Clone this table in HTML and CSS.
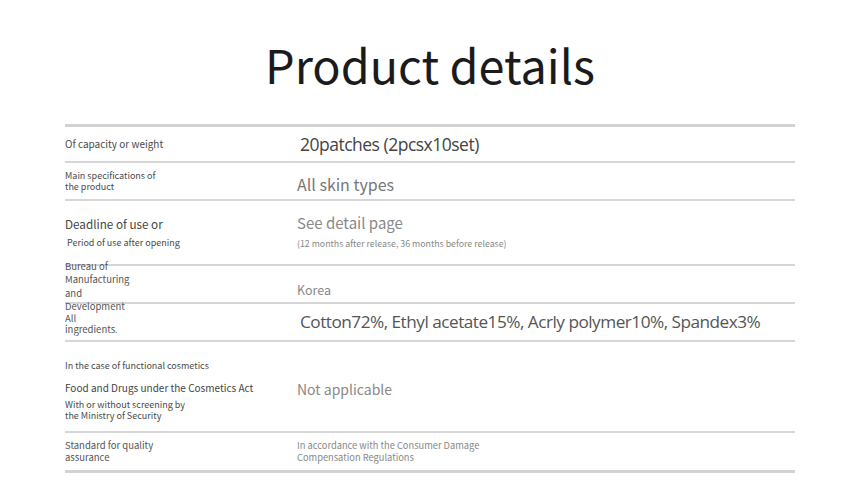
FILE: index.html
```html
<!DOCTYPE html>
<html>
<head>
<meta charset="utf-8">
<link rel="stylesheet" href="styles.css">
</head>
<body>
<div class="page">
  <h1 class="title">Product details</h1>
  <div class="table">
    <div class="row r1">
      <div class="label"><span class="l10">Of capacity or weight</span></div>
      <div class="value"><span class="v-big dark">20patches (2pcsx10set)</span></div>
    </div>
    <div class="row r2">
      <div class="label"><span class="l9">Main specifications of<br>the product</span></div>
      <div class="value pad6"><span class="v16 grey">All skin types</span></div>
    </div>
    <div class="row r3">
      <div class="label col3">
        <span class="l12">Deadline of use or</span>
        <span class="l9 ind">Period of use after opening</span>
      </div>
      <div class="value col3v">
        <span class="v15 grey2">See detail page</span>
        <span class="s9">(12 months after release, 36 months before release)</span>
      </div>
    </div>
    <div class="row r4">
      <div class="label up"><span class="l95">Bureau of<br>Manufacturing<br>and<br>Development</span></div>
      <div class="value"><span class="v13 grey2">Korea</span></div>
    </div>
    <div class="row r5">
      <div class="label down"><span class="l95 tight">All<br>ingredients.</span></div>
      <div class="value"><span class="v-big mid cotton">Cotton72%, Ethyl acetate15%, Acrly polymer10%, Spandex3%</span></div>
    </div>
    <div class="row r6">
      <div class="label col6">
        <span class="l9">In the case of functional cosmetics</span>
        <span class="l10b mt">Food and Drugs under the Cosmetics Act</span>
        <span class="l9 mt2">With or without screening by<br>the Ministry of Security</span>
      </div>
      <div class="value col6v"><span class="v14 grey2">Not applicable</span></div>
    </div>
    <div class="row r7">
      <div class="label"><span class="l95 r7l">Standard for quality<br>assurance</span></div>
      <div class="value"><span class="s95">In accordance with the Consumer Damage<br>Compensation Regulations</span></div>
    </div>
  </div>
</div>
</body>
</html>
```

FILE: styles.css
```css
* { box-sizing: border-box; }
html, body { margin: 0; padding: 0; background: #ffffff; }
body { font-family: "Noto Sans CJK KR", "Noto Sans", sans-serif; color: #444; }

.page { width: 860px; height: 503px; padding-left: 65px; }

.title {
  width: 730px;
  margin: 0;
  height: 124px;
  padding-top: 33px;
  text-align: center;
  font-weight: 400;
  font-size: 46.8px;
  line-height: 62px;
  color: #1b1b1b;
}

.table {
  width: 730px;
  border-top: 3px solid #d2d2d2;
}

.row {
  display: grid;
  grid-template-columns: 232px 1fr;
  border-bottom: 2px solid #d6d6d6;
}
.r1 { height: 36px; }
.r2 { height: 38px; }
.r3 { height: 65px; }
.r4 { height: 38px; }
.r5 { height: 38px; }
.r6 { height: 91px; }
.r7 { height: 40px; border-bottom-width: 3px; border-bottom-color: #d2d2d2; }

.label, .value { display: flex; align-items: center; }

.pad6 { padding-top: 6px; }

.col3 { flex-direction: column; align-items: flex-start; justify-content: flex-start; padding-top: 15px; }
.col3v { flex-direction: column; align-items: flex-start; justify-content: flex-start; padding-top: 12px; }
.col6 { flex-direction: column; align-items: flex-start; justify-content: flex-start; padding-top: 18px; }
.col6v { align-items: flex-start; padding-top: 38px; }

.up { align-items: flex-start; margin-top: -6px; }
.down { padding-top: 3px; }

.l10 { font-size: 10px; line-height: 14px; color: #4a4a4a; }
.l10b { font-size: 10px; line-height: 14px; color: #444; }
.l9 { font-size: 9px; line-height: 11px; color: #4a4a4a; }
.l95 { font-size: 9.5px; line-height: 13.3px; color: #555; }
.l95.tight { line-height: 11px; }
.l95.r7l { line-height: 11.5px; }
.l12 { font-size: 11.7px; line-height: 16px; color: #444; }
.ind { margin-top: 5px; padding-left: 2px; }
.mt { margin-top: 10px; }
.mt2 { margin-top: 4px; }

.v-big { font-family: "Open Sans", sans-serif; font-size: 17.5px; line-height: 22px; letter-spacing: -0.5px; padding-left: 3px; }
.v-big.cotton { font-size: 17.2px; }
.dark { color: #444; }
.mid { color: #555; }
.v16 { font-size: 16px; line-height: 20px; }
.v15 { font-size: 15px; line-height: 20px; }
.v14 { font-size: 14px; line-height: 18px; }
.v13 { font-size: 12.5px; line-height: 16px; }
.grey { color: #777; }
.grey2 { color: #888; }
.s9 { font-size: 8.8px; line-height: 12px; color: #888; margin-top: 5px; }
.s95 { font-size: 9.3px; line-height: 11.5px; color: #888; }
```
